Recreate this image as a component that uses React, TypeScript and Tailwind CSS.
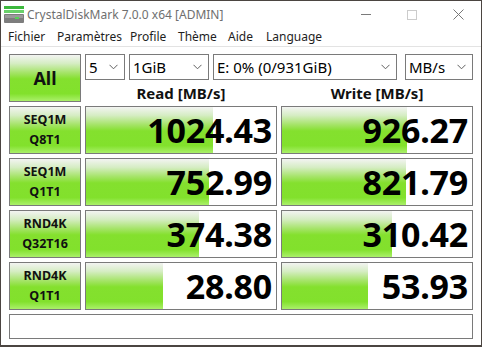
import React from "react";

// green bar gradient used on buttons and result bars
const green =
  "bg-[linear-gradient(to_bottom,#f3f4f2_0%,#d6edc4_18%,#a6e46a_38%,#84e02e_52%,#82e12c_84%,#aaf06a_100%)]";

const rows = [
  { a: "SEQ1M", b: "Q8T1", read: "1024.43", readW: 127, write: "926.27", writeW: 125 },
  { a: "SEQ1M", b: "Q1T1", read: "752.99", readW: 123, write: "821.79", writeW: 124 },
  { a: "RND4K", b: "Q32T16", read: "374.38", readW: 113, write: "310.42", writeW: 110 },
  { a: "RND4K", b: "Q1T1", read: "28.80", readW: 77, write: "53.93", writeW: 86 },
];

const menu = [
  { label: "Fichier", w: "w-[49px]" },
  { label: "Paramètres", w: "w-[73px]" },
  { label: "Profile", w: "w-[48px]" },
  { label: "Thème", w: "w-[50px]" },
  { label: "Aide", w: "w-[38px]" },
  { label: "Language", w: "w-auto" },
];

const Chevron = () => (
  <svg width="9" height="6" viewBox="0 0 9 6" className="shrink-0">
    <path d="M0.5 0.8 L4.5 4.8 L8.5 0.8" fill="none" stroke="#606060" strokeWidth="1" />
  </svg>
);

const Select = ({ text, w }: { text: string; w: string }) => (
  <div className={`${w} h-[26px] border border-[#7a7a7a] bg-white flex items-center justify-between pl-[3px] pr-[6px] text-[15px] text-black`}>
    <span>{text}</span>
    <Chevron />
  </div>
);

const Result = ({ value, fill }: { value: string; fill: number }) => (
  <div className="relative h-[48px] border border-[#7a7a7a] bg-white flex items-center justify-end pr-[4px]">
    <div className={`absolute left-0 top-0 bottom-0 ${green}`} style={{ width: fill }} />
    <span className="relative text-[34px] font-bold leading-none text-black tracking-[-0.2px]">{value}</span>
  </div>
);

const App: React.FC = () => {
  return (
    <div className="w-[482px] h-[347px] bg-[#4b4541] pl-[1px] pr-[1px] pt-[1px] pb-[2px]" style={{ fontFamily: '"Noto Sans", "Open Sans", sans-serif' }}>
      <div className="w-full h-full bg-white flex flex-col">
        {/* title bar */}
        <div className="h-[27px] flex items-center">
          <div className="w-[26px] pl-[3px] flex items-center">
            <svg width="20" height="17" viewBox="0 0 20 17">
              <rect x="0" y="0" width="20" height="3" fill="#3cb83c" />
              <rect x="0" y="4" width="20" height="3" fill="#6ad16a" />
              <rect x="0" y="8" width="20" height="9" rx="1" fill="#7d7d7d" />
              <rect x="1" y="9" width="18" height="3" fill="#9a9a9a" />
              <rect x="11" y="11" width="4" height="2" fill="#58d058" />
            </svg>
          </div>
          <span className="text-[12px] text-[#6f6f6f]">CrystalDiskMark 7.0.0 x64 [ADMIN]</span>
          <div className="ml-auto flex items-center">
            <div className="w-[46px] h-[27px] flex items-center justify-center">
              <div className="w-[10px] h-px bg-[#7a7a7a]" />
            </div>
            <div className="w-[46px] h-[27px] flex items-center justify-center">
              <div className="w-[10px] h-[10px] border border-[#cccccc]" />
            </div>
            <div className="w-[46px] h-[27px] flex items-center justify-center">
              <svg width="11" height="11" viewBox="0 0 11 11">
                <path d="M0.5 0.5 L10.5 10.5 M10.5 0.5 L0.5 10.5" stroke="#777" strokeWidth="1" />
              </svg>
            </div>
          </div>
        </div>
        {/* menu bar */}
        <div className="h-[19px] flex items-center pl-[7px] text-[12px] text-[#1e1e1e] border-b border-[#e3e3e3]">
          {menu.map((m) => (
            <span key={m.label} className={m.w}>{m.label}</span>
          ))}
        </div>
        {/* main */}
        <div className="flex-1 pl-[8px] pt-[7px]">
          <div className="grid grid-cols-[72px_192px_192px] gap-x-[4px] gap-y-[4px]">
            <div className={`h-[48px] border border-[#7a7a7a] ${green} flex items-center justify-center text-[18px] font-bold text-[#111]`}>
              All
            </div>
            <div className="col-span-2 flex flex-col">
              <div className="flex items-center">
                <Select text="5" w="w-[40px]" />
                <div className="w-[4px]" />
                <Select text="1GiB" w="w-[80px]" />
                <div className="w-[4px]" />
                <Select text="E: 0% (0/931GiB)" w="w-[184px]" />
                <div className="w-[8px]" />
                <Select text="MB/s" w="w-[68px]" />
              </div>
              <div className="flex h-[22px] pt-[4px] items-center text-[15px] font-bold text-[#111]">
                <div className="w-[192px] text-center">Read [MB/s]</div>
                <div className="w-[4px]" />
                <div className="w-[192px] text-center">Write [MB/s]</div>
              </div>
            </div>
            {rows.map((r, i) => (
              <React.Fragment key={i}>
                <div className={`h-[48px] border border-[#7a7a7a] ${green} flex flex-col items-center justify-center text-[12.5px] font-bold text-[#111] leading-[20px]`}>
                  <span>{r.a}</span>
                  <span>{r.b}</span>
                </div>
                <Result value={r.read} fill={r.readW} />
                <Result value={r.write} fill={r.writeW} />
              </React.Fragment>
            ))}
            <div className="col-span-3 h-[25px] border border-[#7a7a7a] bg-white" />
          </div>
        </div>
      </div>
    </div>
  );
};

export default App;
